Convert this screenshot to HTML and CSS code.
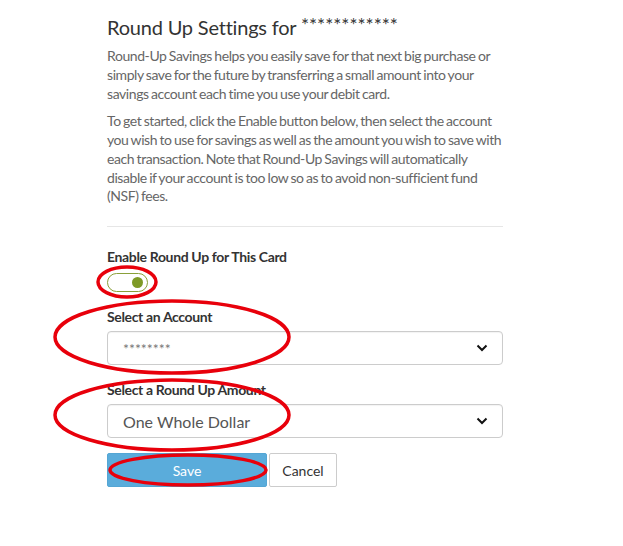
FILE: index.html
```html
<!DOCTYPE html>
<html lang="en">
<head>
    <meta charset="UTF-8">
    <meta name="viewport" content="width=device-width, initial-scale=1.0">
    <title>Round Up Settings</title>
    <link rel="stylesheet" href="styles.css">
</head>
<body>
    <div class="page">
        <h1>Round Up Settings for <span class="mask">************</span></h1>

        <p>Round-Up Savings helps you easily save for that next big purchase or simply save for the future by transferring a small amount into your savings account each time you use your debit card.</p>
        <p>To get started, click the Enable button below, then select the account you wish to use for savings as well as the amount you wish to save with each transaction. Note that Round-Up Savings will automatically disable if your account is too low so as to avoid non-sufficient fund (NSF) fees.</p>

        <hr>

        <div class="field">
            <label>Enable Round Up for This Card</label>
            <span class="toggle on"><span class="knob"></span></span>
        </div>

        <div class="field">
            <label>Select an Account</label>
            <div class="select">
                <span class="value small">********</span>
                <svg class="chevron" width="12" height="8" viewBox="0 0 12 8"><polyline points="1.5,1.5 6,6 10.5,1.5" fill="none" stroke="#111" stroke-width="2"/></svg>
            </div>
        </div>

        <div class="field">
            <label>Select a Round Up Amount</label>
            <div class="select">
                <span class="value">One Whole Dollar</span>
                <svg class="chevron" width="12" height="8" viewBox="0 0 12 8"><polyline points="1.5,1.5 6,6 10.5,1.5" fill="none" stroke="#111" stroke-width="2"/></svg>
            </div>
        </div>

        <div class="actions">
            <button class="btn btn-save">Save</button>
            <button class="btn btn-cancel">Cancel</button>
        </div>
    </div>

    <!-- red annotation marks drawn over the form -->
    <svg class="marks" width="623" height="546" viewBox="0 0 623 546">
        <g fill="none" stroke="#e8000b" stroke-width="3.5">
            <ellipse cx="127" cy="282" rx="29" ry="15"/>
            <ellipse cx="172" cy="337" rx="117" ry="36"/>
            <ellipse cx="172" cy="415" rx="117" ry="35"/>
            <ellipse cx="188" cy="470" rx="78" ry="15"/>
        </g>
    </svg>
</body>
</html>
```
FILE: styles.css
```css
body {
    margin: 0;
    font-family: Lato, "Open Sans", sans-serif;
    color: #333;
    background: #fff;
}
.page {
    width: 396px;
    padding: 12px 0 40px 107px;
}
h1 {
    font-size: 20px;
    font-weight: 400;
    line-height: 26px;
    margin: 0 0 7px;
    color: #333;
    letter-spacing: -0.2px;
}
h1 .mask {
    font-size: 19px;
    letter-spacing: 0;
    vertical-align: 3px;
}
p {
    font-size: 14px;
    line-height: 18.75px;
    letter-spacing: -0.42px;
    word-spacing: -0.8px;
    color: #666;
    margin: 0 0 9px;
}
hr {
    border: 0;
    border-top: 1px solid #e6e6e6;
    margin: 20px 0 20px;
}
.field {
    margin-bottom: 15px;
}
.field label {
    display: block;
    font-size: 14px;
    font-weight: 700;
    line-height: 20px;
    letter-spacing: -0.35px;
    margin-bottom: 4px;
    color: #333;
}
.toggle {
    display: flex;
    align-items: center;
    justify-content: flex-end;
    box-sizing: border-box;
    width: 41px;
    height: 19px;
    margin-top: 6px;
    padding: 0 4px;
    border: 1px solid #8aa03a;
    border-radius: 10px;
    background: #fff;
}
.knob {
    width: 11px;
    height: 11px;
    border-radius: 50%;
    background: #7e9a26;
}
.select {
    display: flex;
    align-items: center;
    justify-content: space-between;
    box-sizing: border-box;
    height: 34px;
    padding: 0 14px 0 15px;
    border: 1px solid #ccc;
    border-radius: 4px;
    background: #fff;
    box-shadow: inset 0 1px 1px rgba(0, 0, 0, 0.05);
}
.select .value {
    font-size: 16px;
    color: #555;
}
.select .value.small {
    font-size: 14px;
    color: #777;
}
.actions {
    display: flex;
    gap: 2px;
}
.btn {
    height: 34px;
    font-family: inherit;
    font-size: 14px;
    border-radius: 2px;
    cursor: pointer;
}
.btn-save {
    width: 160px;
    background: #5aacdb;
    border: 1px solid #55a6d4;
    color: #fff;
}
.btn-cancel {
    width: 68px;
    background: #fff;
    border: 1px solid #ccc;
    color: #333;
}
.marks {
    position: absolute;
    left: 0;
    top: 0;
    pointer-events: none;
}
```
